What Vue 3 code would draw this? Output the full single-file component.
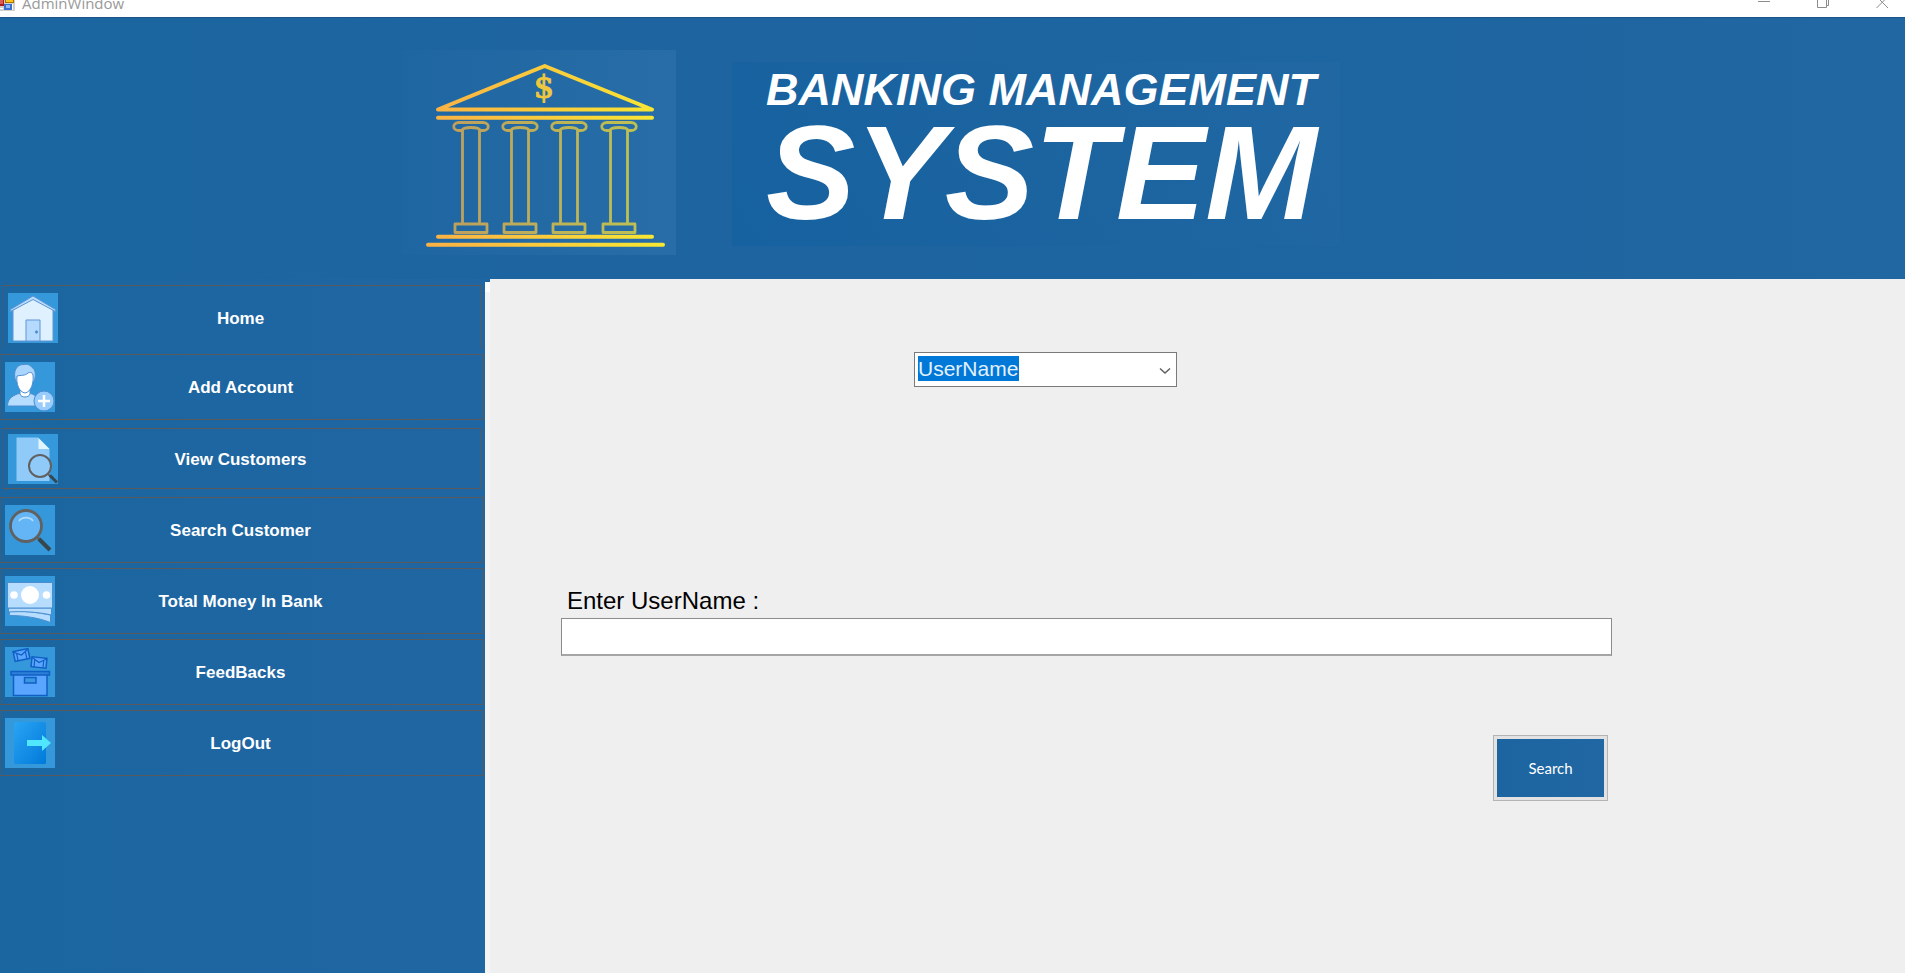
<script setup>
import { ref } from 'vue'

const items = [
  { id: 'home', label: 'Home' },
  { id: 'add', label: 'Add Account' },
  { id: 'view', label: 'View Customers' },
  { id: 'search', label: 'Search Customer' },
  { id: 'money', label: 'Total Money In Bank' },
  { id: 'feedback', label: 'FeedBacks' },
  { id: 'logout', label: 'LogOut' },
]
const columns = [70, 119, 168, 218]
const field = ref('UserName')
const query = ref('')
</script>

<template>
  <div class="window">
    <div class="titlebar">
      <svg class="app-icon" width="16" height="17" viewBox="0 0 16 17" aria-hidden="true">
        <rect width="15" height="11" fill="#d2d0cc" />
        <rect width="4" height="6" fill="#a51d20" />
        <rect width="3" height="4" fill="#dd5a50" />
        <rect x="5" width="9" height="3" fill="#a97400" />
        <rect x="6" width="7" height="2" fill="#fdc21c" />
        <rect x="4" y="4" width="8" height="6" fill="#3b6fd0" />
        <rect x="6" y="5" width="4" height="3" fill="#8fb9fa" />
        <path d="M0 8.500h3M12.500 4v6" stroke="#fff" />
      </svg>
      <span class="caption">AdminWindow</span>
      <div class="controls">
        <button type="button" aria-label="Minimize">
          <svg width="13" height="17" viewBox="0 0 13 17"><path d="M0 1.500h12" /></svg>
        </button>
        <button type="button" aria-label="Restore">
          <svg width="13" height="17" viewBox="0 0 13 17"><path d="M.5 0v7.500h9V0M9.500 5.500h2V0" /></svg>
        </button>
        <button type="button" aria-label="Close">
          <svg width="13" height="17" viewBox="0 0 13 17"><path d="M.5 8 8.500 0M12 8 4 0" /></svg>
        </button>
      </div>
    </div>

    <header class="banner">
      <svg class="bank" width="275" height="205" viewBox="0 0 275 205" aria-hidden="true">
        <defs>
          <linearGradient id="gold" gradientUnits="userSpaceOnUse" x1="27" y1="0" x2="262" y2="0">
            <stop offset="0" stop-color="#fbb045" />
            <stop offset="1" stop-color="#f8e832" />
          </linearGradient>
        </defs>
        <g fill="none" stroke="url(#gold)" stroke-width="4" stroke-linecap="round" stroke-linejoin="round">
          <path d="M37 59.500 143.700 16 251 59.500ZM37 67.700 251 67.710M37 186.700 251 186.710M27 194.700 262 194.710" />
        </g>
        <g fill="none" stroke="url(#gold)" stroke-width="2.800" stroke-linejoin="round" opacity=".72">
          <path
            v-for="x in columns"
            :key="x"
            :d="`M${x - 12} 72.500h24c7 0 7 8 0 8h-3c-1-4-17-4-18 0h-3c-7 0-7-8 0-8ZM${x - 8.5} 80v93M${x + 8.5} 80v93M${x - 16} 174h32v8.500h-32z`"
          />
        </g>
        <text class="dollar" x="143" y="48" text-anchor="middle" fill="#f0c83e" stroke="#f0c83e">$</text>
      </svg>
      <h1 class="brand">
        <span class="brand-top">BANKING MANAGEMENT</span>
        <span class="brand-main">SYSTEM</span>
      </h1>
    </header>

    <div class="body">
      <nav class="side">
        <button v-for="item in items" :key="item.id" type="button" class="item" :class="item.id">
          <svg class="icon" width="50" height="50" viewBox="0 0 50 50" aria-hidden="true">
            <rect width="50" height="50" fill="#3498db" />
            <g v-if="item.id === 'home'" stroke="#5e96d4">
              <path d="M5 48V17L25 5l20 12v31z" fill="#dff0fe" />
              <path d="M2.500 16.500 25 3l22.500 13.500v2L25 6.500 2.500 18.500z" fill="#b8dcfd" />
              <path d="M18 48V27h14v21z" fill="#b5daff" />
              <circle cx="28.500" cy="39" r="1.200" fill="#4788c7" />
            </g>
            <g v-else-if="item.id === 'add'">
              <path d="M2.500 44c0-8 6-11 13-13h8c6 1 10 4 11 13z" fill="#b6dcfe" stroke="#4b8ed0" />
              <path d="M15 28h10v4c-1 4-9 4-10 0z" fill="#fff" stroke="#4b8ed0" />
              <path d="M11 20C7 9 12 2 19 2.500c5-1 7 2 8 3 4 2 4 9 2 14z" fill="#a9d5fe" stroke="#4b8ed0" />
              <path d="M12 14c4-1 8 0 11-3 2-1 4-1 5 2 1 8-2 17-8 18-6-1-9-9-8-17z" fill="#fff" stroke="#4b8ed0" />
              <circle cx="39" cy="39" r="10" fill="#98ccfd" stroke="#4b8ed0" />
              <path d="M39 33v12M33 39h12" stroke="#fff" stroke-width="2.500" />
            </g>
            <g v-else-if="item.id === 'view'">
              <path d="M8.500 3.500H30l11.500 11.500v32h-33z" fill="#90caf9" />
              <path d="M30.500 4v11h11z" fill="#e1f5fe" />
              <circle cx="32" cy="32" r="11" fill="#90caf9" stroke="#616161" stroke-width="2" />
              <path d="m40 40 4 4" stroke="#616161" stroke-width="2" />
              <path d="m42 41.500 7 7" stroke="#37474f" stroke-width="3" />
            </g>
            <g v-else-if="item.id === 'search'">
              <path d="m32 32 5 5" stroke="#616161" stroke-width="3" />
              <path d="m34 34 11 11" stroke="#37474f" stroke-width="4" />
              <circle cx="21" cy="21" r="15.500" fill="#64b5f6" stroke="#616161" stroke-width="2.800" />
              <path d="M14 16c3-4.500 11-4.500 14 0" fill="none" stroke="#b3dcfb" stroke-width="1.600" />
            </g>
            <g v-else-if="item.id === 'money'">
              <path d="M4.500 35c14 0 27 1 41 4v7.500c-13-5-27-7-41-7z" fill="#b6dcfe" stroke="#4b8ed0" />
              <path d="M3.500 32h43v7c-14-3-28-4-43-3z" fill="#b6dcfe" stroke="#4b8ed0" />
              <path d="M2.500 6.500h45V32h-45z" fill="#b6dcfe" stroke="#4b8ed0" />
              <circle cx="25" cy="19" r="9" fill="#fff" />
              <circle cx="9" cy="19" r="3.800" fill="#fff" />
              <circle cx="41.500" cy="19" r="3.800" fill="#fff" />
            </g>
            <g v-else-if="item.id === 'feedback'" fill="#5aa5ff" stroke="#0f5fc4" stroke-width="1.500">
              <path d="M8.500 27h33.500v21.500H8.500z" />
              <path d="M6 24.500h38.500V28H6z" fill="#2d7fd8" />
              <path d="M19.500 30.500h11.500v5.500H19.500z" fill="#3a97e0" />
              <g transform="rotate(-12 16.500 8)">
                <path d="M9 3h15v10H9z" />
                <path d="M9 3.500 16.500 8 24 3.500M12 13V6M21 13V6" fill="none" stroke-width="1.200" />
              </g>
              <g transform="rotate(6 34 15.500)">
                <path d="M26.500 10.500h15v10h-15z" />
                <path d="m26.500 11 7.500 4.500 7.500-4.500M29.500 20.500v-7M38.500 20.500v-7" fill="none" stroke-width="1.200" />
              </g>
            </g>
            <g v-else>
              <defs>
                <linearGradient id="door" x1="0" y1="0" x2="1" y2="1">
                  <stop offset="0" stop-color="#2aa4f4" />
                  <stop offset="1" stop-color="#007ad9" />
                </linearGradient>
              </defs>
              <rect x="9" y="4" width="32" height="42" rx="1.500" fill="url(#door)" />
              <path d="M22 22h15v-5l9 8-9 8v-5H22z" fill="#50e6ff" />
            </g>
          </svg>
          <span>{{ item.label }}</span>
        </button>
      </nav>

      <main class="main">
        <form class="form" @submit.prevent>
          <select v-model="field" class="combo" aria-label="Search field">
            <option>UserName</option>
          </select>
          <svg class="chevron" width="12" height="8" viewBox="0 0 12 8" aria-hidden="true">
            <path d="m1 1.500 5 4.500 5-4.500" fill="none" stroke="#606060" stroke-width="1.500" />
          </svg>
          <label class="label" for="query">Enter UserName :</label>
          <input id="query" v-model="query" class="query" type="text" />
          <button class="submit" type="submit">Search</button>
        </form>
      </main>
    </div>
  </div>
</template>

<style>
body {
  margin: 0;
  background: #efefef;
}
</style>

<style scoped>
.window {
  display: flex;
  flex-direction: column;
  min-height: 100vh;
  font-family: "Liberation Sans", Arial, sans-serif;
  background: #efefef;
}
button {
  font-family: inherit;
  cursor: pointer;
}
.titlebar {
  display: flex;
  height: 17px;
  overflow: hidden;
  background: #fff;
}
.caption {
  margin: -8px 0 0 6px;
  font: 15px/22px "Open Sans", sans-serif;
  color: #999;
}
.controls {
  display: flex;
  gap: 46px;
  margin-left: auto;
  padding-right: 16px;
}
.controls button {
  width: 13px;
  height: 17px;
  padding: 0;
  border: 0;
  background: none;
}
.controls svg {
  display: block;
  fill: none;
  stroke: #8c8c8c;
}
.banner {
  display: flex;
  align-items: flex-start;
  gap: 56px;
  height: 262px;
  box-sizing: border-box;
  padding: 33px 0 0 401px;
  background: linear-gradient(90deg, #1b66a0, #1e64a0 40%, #1c65a0 60%, #2167a2);
  box-shadow: inset 0 1px #1a5488;
}
.bank {
  flex: none;
  background: linear-gradient(90deg, #1e66a2, #286da7);
}
.dollar {
  font: 32px "DejaVu Serif", serif;
}
.brand {
  display: flex;
  flex-direction: column;
  width: 608px;
  height: 184px;
  box-sizing: border-box;
  margin: 12px 0 0;
  padding: 6px 0 0 34px;
  background: linear-gradient(60deg, #1661a0, #1b64a0 50%, #2168a3);
  color: #fff;
  font-style: italic;
  font-weight: 700;
  white-space: nowrap;
}
.brand-top {
  font-size: 45px;
  line-height: 44px;
}
.brand-main {
  font-size: 134px;
  line-height: 121px;
}
.body {
  display: flex;
  flex: 1;
}
.side {
  display: flex;
  flex-direction: column;
  gap: 5px;
  width: 485px;
  flex: none;
  box-sizing: border-box;
  padding: 6px 2px 5px 0;
  background: linear-gradient(90deg, #1b66a0, #2066a2);
}
.item {
  position: relative;
  display: flex;
  align-items: center;
  justify-content: center;
  height: 66px;
  box-sizing: border-box;
  padding: 2px 2px 0 0;
  border: 1px solid #5a5a5c;
  border-left-color: #3d5d7c;
  background: none;
  color: #fff;
  font-size: 17px;
  font-weight: 700;
  line-height: 20px;
}
.icon {
  position: absolute;
  left: 4px;
  top: 7px;
}
.home,
.view {
  margin: 0 2px;
}
.home {
  height: 64px;
  border-bottom: 0;
}
.home .icon,
.view .icon {
  left: 5px;
}
.view {
  height: 61px;
  margin: 3px 2px;
}
.view .icon {
  top: 5px;
}
.main {
  position: relative;
  flex: 1;
  min-width: 0;
  border-left: 5px solid #f4f4f4;
}
.main::before {
  content: "";
  position: absolute;
  left: -5px;
  top: 0;
  width: 5px;
  height: 10px;
  border-top: 3px solid #1c65a0;
  background: #fff;
}
.form {
  position: relative;
  display: flex;
  flex-direction: column;
  align-items: flex-start;
  padding: 73px 293px 40px 71px;
}
.combo {
  width: 263px;
  height: 35px;
  margin-left: 353px;
  padding: 0 0 2px 3px;
  appearance: none;
  border: 1px solid #7a7a7a;
  border-radius: 0;
  background: linear-gradient(#0078d7, #0078d7) 3px 3px / 101px 25px no-repeat #fff;
  color: #e4f1fc;
  font: 21px "Liberation Sans", Arial, sans-serif;
}
.combo option {
  color: #000;
}
.chevron {
  position: absolute;
  left: 669px;
  top: 88px;
  pointer-events: none;
}
.label {
  margin: 200px 0 3px 6px;
  color: #000;
  font-size: 24px;
  line-height: 28px;
}
.query {
  width: 100%;
  height: 38px;
  box-sizing: border-box;
  padding: 0 8px;
  border: 1px solid #8c8c8c;
  border-bottom: 2px solid #a5a5a5;
  border-radius: 0;
  background: #fff;
  font: 24px "Liberation Sans", Arial, sans-serif;
}
.submit {
  align-self: flex-end;
  width: 115px;
  height: 66px;
  margin: 79px 4px 0 0;
  padding: 3px;
  border: 1px solid #b4b4b4;
  background: linear-gradient(90deg, #1c65a1, #2067a3) content-box, #e2e2e2;
  color: #fff;
  font: 15px Lato, sans-serif;
}
</style>
